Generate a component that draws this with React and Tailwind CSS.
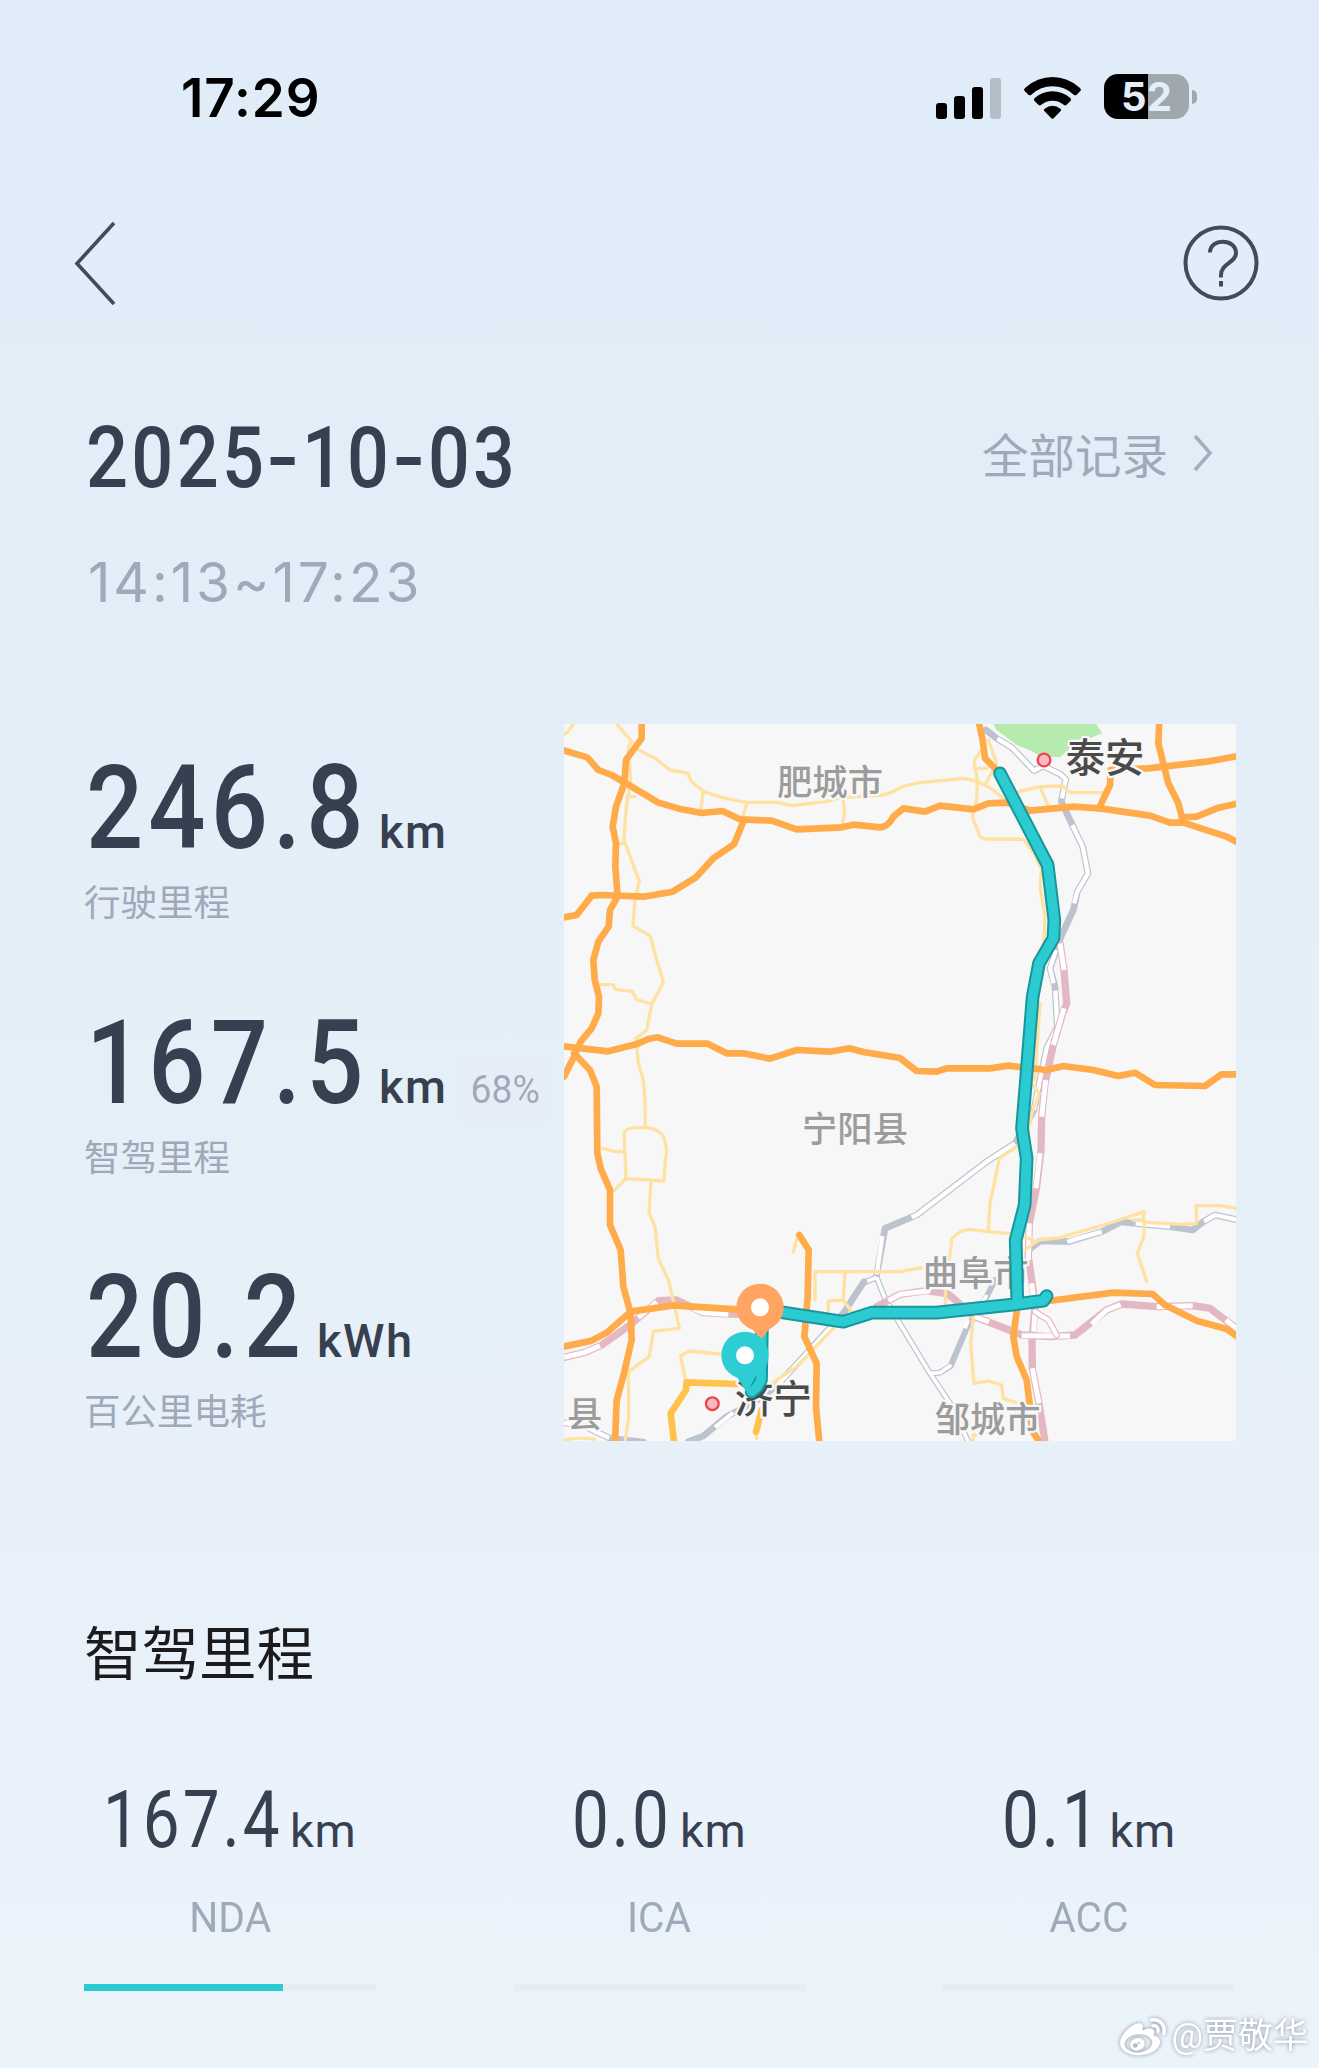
import React from "react";
import { FaWeibo } from "react-icons/fa";

const stats = [
  { value: "246.8", unit: "km", label: "行驶里程", width: "w-[293px]" },
  { value: "167.5", unit: "km", label: "智驾里程", width: "w-[293px]", percent: "68%" },
  { value: "20.2", unit: "kWh", label: "百公里电耗", width: "w-[231px]" },
];

const modes = [
  { name: "NDA", value: "167.4", width: "w-[187px]", progress: 68 },
  { name: "ICA", value: "0.0", width: "w-[108px]", progress: 0 },
  { name: "ACC", value: "0.1", width: "w-[108px]", progress: 0 },
];

// coloured line with white stripes on it, used for railways and motorways
function Rail({ d, color, white, width = 20 }) {
  return (
    <>
      <path d={d} stroke={color} strokeWidth={width} />
      <path d={white} stroke="#fff" strokeWidth={width - 7} strokeLinecap="butt" />
    </>
  );
}

function Pin({ x, y, color, tipX, tipY }) {
  return (
    <g stroke="none">
      <path d={`M${x - 30} ${y + 55} L${tipX} ${tipY} L${x + 35} ${y + 55} Z`} fill={color} />
      <circle cx={x} cy={y} r="71" fill={color} />
      <circle cx={x} cy={y} r="27" fill="#fff" />
    </g>
  );
}

const GREY = "#bcc3cf";
const PINK = "#e3b8c2";

const ROUTE =
  "M1320 160 L1463 435 L1483 600 L1480 655 L1437 730 L1418 830 L1398 1080 L1386 1225 L1400 1315 L1394 1455 L1367 1560 L1372 1745 M1460 1728 L1450 1742 L1365 1753 L1130 1778 L935 1778 L850 1805 L660 1776 M606 1800 L603 1980 L592 2000 L575 2015";

function RouteMap() {
  return (
    <svg
      className="h-[717px] w-[672px] shrink-0 bg-[#f7f7f7]"
      viewBox="12 12 2016 2151"
      fill="none"
      strokeLinecap="round"
      strokeLinejoin="round"
    >
      {/* park */}
      <path
        d="M1300 12 L1310 30 L1370 75 L1420 95 L1440 110 L1500 112 L1530 85 L1590 55 L1627 40 L1608 12 Z"
        fill="#b5ebae"
      />

      {/* railways */}
      <Rail
        color={GREY}
        d="M1278 30 L1310 55 L1355 82 L1422 152 L1450 138 L1500 162 L1517 178 L1504 245 L1537 315 L1568 380 L1584 460 L1552 515 L1540 570 L1505 645 L1470 745 L1485 800 L1492 920 L1460 985 L1440 1080 L1422 1170 L1365 1270 L1280 1325 L1070 1485 L975 1525 L950 1665"
        white="M1312 56 L1355 82 L1422 152 L1450 138 L1500 162 L1517 178 L1506 235 M1537 315 L1568 380 L1584 460 L1552 515 L1542 550 M1488 690 L1470 745 L1481 790 M1486 812 L1492 920 L1460 985 L1440 1080 L1422 1170 M1365 1270 L1280 1325 L1070 1485 L1055 1492 M967 1548 L950 1665"
      />
      <Rail
        color={GREY}
        width={18}
        d="M950 1672 L975 1735 L1022 1815 L1110 1960 L1170 2050 L1225 2165 M950 1672 L912 1688 M1305 1680 L1265 1760 L1222 1820 L1172 1938 L1140 1958 L1112 1960"
        white="M950 1672 L975 1735 L1022 1815 L1110 1960 L1170 2050 L1225 2165 M950 1672 L912 1688 M1225 1800 L1215 1825 M1174 1935 L1140 1958 L1112 1960 M1280 1725 L1270 1745"
      />
      <Rail
        color={GREY}
        d="M912 1685 L850 1780 L650 1998 L585 2045 L500 2090 L430 2148 L385 2165 M12 2108 L80 2122 L150 2155 L250 2166"
        white="M825 1808 L650 1998 M520 2078 L465 2122 M12 2108 L80 2122 L148 2154"
      />
      <Rail
        color={GREY}
        d="M1405 1590 L1440 1563 L1528 1565 L1625 1535 L1682 1506 L1725 1510 L1830 1520 L1898 1530 L1930 1505 L1965 1485 L2035 1500"
        white="M1522 1566 L1545 1558 L1625 1535 M1727 1510 L1830 1520 M1932 1504 L1965 1485 L2035 1500"
      />
      <Rail
        color={PINK}
        width={22}
        d="M1500 670 L1512 750 L1520 850 L1508 880 L1480 975 L1455 1090 L1445 1190 L1443 1290 L1430 1400 L1408 1510 L1405 1610 L1418 1700 L1425 1760 L1416 1860 L1417 1945 L1437 2050 L1455 2165"
        white="M1500 670 L1512 750 M1512 865 L1480 975 M1457 1080 L1445 1190 M1440 1300 L1428 1405 M1408 1510 L1405 1620 M1415 1690 L1425 1770 L1421 1835 M1417 1945 L1437 2050"
      />
      <Rail
        color={PINK}
        width={22}
        d="M12 1912 L75 1897 L125 1875 L210 1815 L295 1742 L350 1740 L430 1778 L530 1783 M950 1760 L1020 1723 L1100 1712 L1165 1722 L1240 1788 L1385 1845 L1470 1850 L1545 1845 L1640 1770 L1685 1752 L1790 1760 L1900 1757 L1950 1765 L2035 1830"
        white="M12 1912 L75 1897 L120 1877 M235 1793 L290 1746 M400 1766 L430 1778 L505 1783 M985 1742 L1020 1723 L1110 1712 M1240 1788 L1287 1806 M1385 1847 L1530 1848 M1595 1812 L1640 1770 L1682 1754 M1790 1760 L1898 1757 M1998 1800 L2035 1830"
      />
      <path d="M1425 1775 L1465 1800 L1490 1845" stroke={PINK} strokeWidth="20" />
      <path d="M1425 1775 L1465 1800 L1490 1845" stroke="#fff" strokeWidth="13" />

      {/* small roads */}
      <g stroke="#ffe2a2" strokeWidth="10">
        <path d="M12 42 L22 38 L40 12 M170 12 L215 65 L205 80 L212 180 L205 230 L225 230 M235 90 L285 115 L330 150 L385 160 Q385 185 430 213 Q480 235 560 247 L650 247 L695 257 L795 245 L850 232 L970 225 L1000 215 L1020 203 Q1060 188 1110 185 L1210 175 Q1280 185 1335 240 M430 213 L422 270 M562 247 L548 290 M850 240 L854 275 L848 310" />
        <path d="M203 225 Q195 290 192 360 L238 485 L225 540 L219 618 L270 647 L293 730 L310 785 L275 855 L260 930 L228 955 L235 1030 L250 1080 L255 1145 L256 1222 M120 794 L160 794 L165 808 L218 814 L228 838 L275 852 M175 370 L195 370" />
        <path d="M192 1240 Q192 1222 256 1222 Q300 1225 312 1255 Q325 1290 316 1320 L312 1383 L198 1376 Z M128 1285 L165 1295 L192 1295 M198 1376 L162 1412 M273 1385 L267 1478 L285 1520 L295 1615 L325 1680 L342 1750 L358 1825 L280 1834 L268 1910 L205 1955 L206 2090 L196 2160" />
        <path d="M1260 95 L1242 125 L1252 180 L1250 240 L1237 290 L1260 350 L1275 357 L1390 358 L1425 405 L1445 450 L1440 500 L1455 590 L1450 700 M1285 60 L1310 130 L1278 190 M1375 215 L1440 200 L1508 198 L1530 218 L1630 218 M1440 200 L1465 260 M1245 145 L1280 145 M1440 850 L1424 1080" />
        <path d="M1418 1095 L1438 1120 L1415 1180 L1400 1260 L1318 1315 L1290 1450 L1285 1535 M1020 1655 L1085 1643 M1168 1620 L1176 1555 Q1200 1530 1230 1528 L1285 1535 L1370 1543 L1420 1560 M1395 1590 L1435 1560 L1500 1553 L1640 1512 L1752 1475 L1750 1500 L1720 1500 M1750 1507 L1870 1513 L1910 1510 L1908 1457 L1980 1457 L2030 1465 M1752 1500 L1752 1550 L1732 1600 L1760 1685 M1157 1715 L1155 1760 M1240 1790 L1232 1870 L1242 1990 L1285 1983 L1325 1995 L1330 2035 L1375 2050 M1238 2165 L1240 2145 L1255 2145" />
        <path d="M715 1540 L700 1597 M765 1740 L765 1655 L1020 1655 M855 1655 L850 1740 L805 1743 L805 1780 M850 1740 L875 1775 M480 1902 L390 1893 L362 1907 L378 1990 M12 2160 Q60 2150 105 2158 M825 1820 L710 1940 L635 1990 M590 2155 L588 2135" />
      </g>

      {/* main roads */}
      <g stroke="#ffab4a" strokeWidth="20">
        <path d="M245 0 L245 55 L198 120 L193 190 L168 260 L158 320 L168 370 L166 440 L173 530 L150 570 L146 620 L115 665 L100 720 L104 780 L117 830 L115 880 L95 925 L62 965 L42 1010 L12 1070" />
        <path d="M0 88 L82 112 L115 150 L155 165 L215 200 L295 248 L365 268 L425 279 L487 273 L540 298 L635 302 L710 328 L845 322 L880 314 L960 322 Q985 320 1000 290 L1030 265 L1095 275 L1140 257 L1240 268 L1285 250 L1340 248 L1410 272 L1540 260 L1620 265 L1770 287 L1830 308 L1870 308 L2000 350 L2035 368" />
        <path d="M552 300 L522 373 L460 415 L408 472 L338 515 L250 530 L125 525 L95 527 L50 585 L0 594" />
        <path d="M0 978 L145 994 L228 973 L265 957 L293 952 L350 971 L443 971 L500 1000 L550 1000 L630 1016 L710 990 L810 995 L868 985 L910 996 L1020 1014 L1070 1053 L1130 1055 L1160 1045 L1290 1045 L1345 1037 L1460 1050 L1510 1038 L1600 1050 L1675 1068 L1725 1058 L1785 1095 L1935 1098 L1985 1063 L2035 1063" />
        <path d="M42 1000 L90 1050 L110 1100 L112 1300 L122 1345 L150 1410 L150 1515 L182 1590 L190 1700 L212 1780 L215 1860 L192 1960 L170 2040 L165 2165" />
        <path d="M0 1882 L95 1862 L140 1838 L212 1775 L340 1756 L530 1768 M718 1545 L746 1590 L743 1730 L733 1850 L770 1930 L768 2060 L778 2165" />
        <path d="M1255 0 L1268 60 L1275 115 L1325 165 M1798 0 L1795 70 L1825 190 L1855 250 L1868 300 M1617 265 L1650 195 L1652 150 L1765 145 L1940 125 L2035 108 M1865 292 L1910 290 L1970 265 L2035 250" />
        <path d="M1465 1743 L1660 1718 L1778 1722 L1815 1755 L1910 1802 L2000 1827 L2035 1852 M1372 1760 L1360 1850 L1370 1910 L1400 1980 L1410 2060 L1415 2130 L1438 2165" />
      </g>
      <path d="M530 1992 L380 1987 L378 2010 L332 2080 L342 2165 M605 2070 L588 2135" stroke="#ffc24a" strokeWidth="20" />

      {/* place names */}
      <g
        className="font-['Noto_Sans_CJK_SC',sans-serif] font-medium"
        fontSize="106"
        fill="#9c9c9c"
        stroke="#f7f7f7"
        strokeWidth="14"
        paintOrder="stroke"
      >
        <text x="651" y="225">肥城市</text>
        <text x="726" y="1266">宁阳县</text>
        <text x="1088" y="1698">曲阜市</text>
        <text x="1124" y="2136">邹城市</text>
        <text x="21" y="2122">县</text>
        <text x="1517" y="155" fontSize="118" fill="#4a4a4a">泰安</text>
        <text x="524" y="2080" fontSize="116" fill="#4a4a4a">济宁</text>
      </g>
      <g fill="#f9b8c4" stroke="#ee4550" strokeWidth="7">
        <circle cx="1452" cy="120" r="19" />
        <circle cx="457" cy="2051" r="19" />
      </g>

      {/* driven route */}
      <path d={ROUTE} stroke="#17969c" strokeWidth="41" />
      <path d={ROUTE} stroke="#2ccbd2" strokeWidth="29" />
      <Pin x={600} y={1762} tipX={602} tipY={1860} color="#ffa561" />
      <Pin x={555} y={1906} tipX={560} tipY={2018} color="#2ccdd3" />
    </svg>
  );
}

function StatusBar() {
  return (
    <div className="flex h-[196px] shrink-0 items-center pl-[181px] font-['Inter',sans-serif] text-black">
      <div className="w-[755px] text-[53px] leading-none font-semibold tracking-[0.9px]">17:29</div>
      <svg className="h-[41px] w-[65px]" viewBox="0 0 65 41">
        <rect x="0" y="25" width="11" height="16" rx="3" />
        <rect x="18" y="18" width="11" height="23" rx="3" />
        <rect x="36" y="9" width="11" height="32" rx="3" />
        <rect x="54" y="0" width="11" height="41" rx="3" fill="#b3bec9" />
      </svg>
      <svg className="ml-[23px] h-[42px] w-[57px]" viewBox="0 0 171 126">
        <path d="M2 42 Q-2 37 4 32 Q40 0 85.500 0 Q131 0 167 32 Q173 37 169 42 L158 53 Q154 57 149 53 Q121 28 85.500 28 Q50 28 22 53 Q17 57 13 53 Z" />
        <path d="M31 71 Q28 67 32 63 Q56 43 85.500 43 Q115 43 139 63 Q143 67 140 71 L128 83 Q124 87 120 84 Q105 71 85.500 71 Q66 71 51 84 Q47 87 43 83 Z" />
        <path d="M61 102 Q58 98 62 95 Q73 86 85.500 86 Q98 86 109 95 Q113 98 110 102 L89 124 Q85.500 127 82 124 Z" />
      </svg>
      <div className="mb-[3px] ml-[23px] flex items-center">
        <div className="flex h-[45px] w-[85px] items-center justify-center rounded-[14px] bg-[linear-gradient(90deg,#000_44px,#9fa7af_44px)] text-[40px] leading-none font-bold text-[#e3eefa]">
          52
        </div>
        <div className="ml-[3px] h-[14px] w-[5px] rounded-r-full bg-[#9fa7af]" />
      </div>
    </div>
  );
}

function App() {
  return (
    <div className="relative flex h-[2068px] w-[1319px] flex-col overflow-hidden bg-linear-to-b from-[#e0ecf8] via-[#e5eff8] to-[#ebf3fb] font-['Roboto','Noto_Sans_CJK_SC',sans-serif] text-[#374050]">
      <StatusBar />

      {/* nav */}
      <div className="flex h-[134px] shrink-0 items-center justify-between pr-[60px] pl-[74px]">
        <svg className="h-[86px] w-[44px]" viewBox="0 0 44 86" fill="none" stroke="#414b5a" strokeWidth="3.600">
          <path d="M40 3 L3 43.500 L40 84" />
        </svg>
        <svg className="h-[76px] w-[76px]" viewBox="0 0 76 76" fill="none" stroke="#414b5a" strokeWidth="4">
          <circle cx="38" cy="38" r="35.500" />
          <path d="M27 27.500 C27 13 53 13 53 28 C53 38 38 38 38 50 V52.500" />
          <path d="M38 56 V61.500" />
        </svg>
      </div>

      {/* date */}
      <div className="mt-[87px] flex h-[84px] shrink-0 justify-between pr-[105px] pl-[86px]">
        <h1 className="flex text-[84.500px] leading-[84px] font-medium tracking-[3.800px]">
          <span className="inline-block w-[181px] origin-left scale-x-[0.875]">2025</span>
          <span className="inline-block w-[35px] origin-left scale-x-110">-</span>
          <span className="inline-block w-[91px] origin-left scale-x-[0.87]">10</span>
          <span className="inline-block w-[35px] origin-left scale-x-110">-</span>
          <span className="inline-block w-[90px] origin-left scale-x-[0.87]">03</span>
        </h1>
        <div className="flex h-[71px] items-center font-['Noto_Sans_CJK_SC',sans-serif] text-[46.500px] leading-[71px] text-[#9fa9b9]">
          <span>全部记录</span>
          <svg className="ml-[24px] h-[40px] w-[22px]" viewBox="0 0 22 40" fill="none" stroke="#a3adbc" strokeWidth="3.500">
            <path d="M3 3 L18 20 L3 37" />
          </svg>
        </div>
      </div>
      <div className="mt-[51px] ml-[88px] h-[60px] shrink-0 font-['Inter',sans-serif] text-[55px] leading-[60px] tracking-[3px] text-[#9fa9b9]">
        14:13~17:23
      </div>

      {/* trip stats and map */}
      <div className="mt-[112px] flex h-[717px] shrink-0 pl-[84px]">
        <div className="w-[480px] pt-[34px]">
          {stats.map((item) => (
            <div key={item.label + item.value} className="h-[254.500px]">
              <div className="flex h-[100px] items-baseline pl-[2px] font-medium">
                <div className={item.width}>
                  <span className="inline-block origin-left scale-x-[0.86] text-[117px] leading-[100px] tracking-[6px]">
                    {item.value}
                  </span>
                </div>
                <div className="text-[47px] leading-[60px]">
                  <span className="inline-block origin-left tracking-[1.500px]">{item.unit}</span>
                </div>
                {item.percent && (
                  <span className="ml-[15px] h-[69px] w-[85px] shrink-0 bg-[#e7edf6] text-center text-[39px] leading-[69px] font-normal text-[#9fa9b9]">
                    <span className="inline-block scale-x-[0.96]">{item.percent}</span>
                  </span>
                )}
              </div>
              <div className="mt-[23px] font-['Noto_Sans_CJK_SC',sans-serif] text-[36.500px] leading-[40px] text-[#9fa9b9]">
                {item.label}
              </div>
            </div>
          ))}
        </div>
        <RouteMap />
      </div>

      <h2 className="mt-[180px] ml-[84px] h-[59px] shrink-0 font-['Noto_Sans_CJK_SC',sans-serif] text-[57.500px] leading-[59px] text-[#1b1b1e]">
        智驾里程
      </h2>

      {/* assisted driving modes */}
      <div className="mt-[100px] flex shrink-0 justify-between pr-[84px] pl-[84px]">
        {modes.map((mode) => (
          <div key={mode.name} className="w-[292px]">
            <div className="flex h-[80px] items-baseline justify-center">
              <div className={mode.width}>
                <span className="inline-block origin-left scale-x-[0.83] text-[79px] leading-[80px] tracking-[3.600px]">
                  {mode.value}
                </span>
              </div>
              <div className="w-[67px] text-[47px] leading-[60px]">
                <span className="inline-block tracking-[0.800px]">km</span>
              </div>
            </div>
            <div className="mt-[36px] text-center text-[42px] leading-[44px] text-[#9fa9b9]">
              <span className="inline-block scale-x-[0.97]">{mode.name}</span>
            </div>
            <div className="mt-[44px] h-[7px] bg-[#e8ecf5]">
              <div className="h-full bg-[#2ccbd2]" style={{ width: mode.progress + "%" }} />
            </div>
          </div>
        ))}
      </div>

      {/* watermark */}
      <div className="absolute right-[11px] bottom-[6px] flex items-center gap-[6px] text-[35px] leading-[48px] text-white [filter:drop-shadow(0_0_2px_#8a93a0)]">
        <FaWeibo className="h-[46px] w-[46px]" />
        <span className="pb-[1px]">@贾敬华</span>
      </div>
    </div>
  );
}

export default App;
